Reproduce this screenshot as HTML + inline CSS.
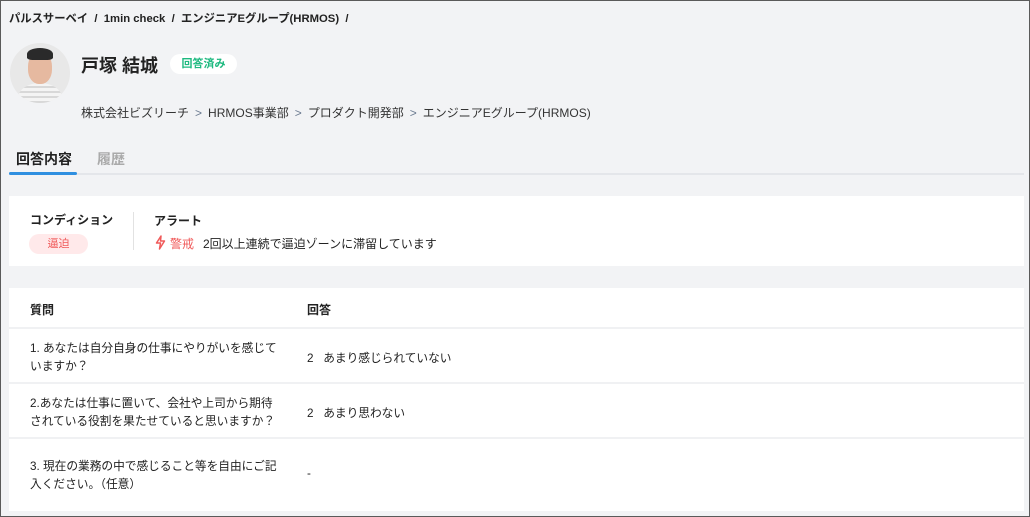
<!DOCTYPE html>
<html><head><meta charset="utf-8"><style>
*{margin:0;padding:0;box-sizing:border-box}
html,body{width:1030px;height:517px;overflow:hidden}
body{background:#f2f3f5;font-family:"Liberation Sans","Noto Sans CJK JP",sans-serif;color:#333;position:relative;border:1.5px solid #5a5a5a}
.a{position:absolute;white-space:nowrap}
.c{color:#6a7a90;margin:0 6px}
</style></head><body>
<div class="a" style="left:8px;top:9px;font-size:11.3px;font-weight:bold;color:#222">パルスサーベイ &nbsp;/&nbsp; 1min check &nbsp;/&nbsp; エンジニアEグループ(HRMOS) &nbsp;/</div>
<div class="a" style="left:9px;top:42px;width:60px;height:60px;border-radius:50%;background:#e8e8e8;overflow:hidden">
<div style="position:absolute;left:8px;top:40px;width:44px;height:30px;border-radius:50% 50% 0 0;background:repeating-linear-gradient(#f4f4f4 0 3px,#d8d8d8 3px 5px)"></div>
<div style="position:absolute;left:18px;top:9px;width:24px;height:32px;border-radius:45%;background:#e6b9a0"></div>
<div style="position:absolute;left:17px;top:5px;width:26px;height:12px;border-radius:50% 50% 20% 20%;background:#2a2a2a"></div>
</div>
<div class="a" style="left:80px;top:51px;font-size:18px;font-weight:bold;color:#222">戸塚 結城</div>
<div class="a" style="left:169px;top:53px;width:67px;height:20px;border-radius:10px;background:#fff;color:#1eb980;font-size:11px;font-weight:bold;text-align:center;line-height:20px">回答済み</div>
<div class="a" style="left:80px;top:103px;font-size:12px;color:#333">株式会社ビズリーチ<span class="c">&gt;</span>HRMOS事業部<span class="c">&gt;</span>プロダクト開発部<span class="c">&gt;</span>エンジニアEグループ(HRMOS)</div>
<div class="a" style="left:15px;top:148px;font-size:14px;font-weight:bold;color:#222">回答内容</div>
<div class="a" style="left:96px;top:148px;font-size:14px;font-weight:bold;color:#aaa">履歴</div>
<div class="a" style="left:8px;top:172px;width:1015px;height:2px;background:#e4e6ea"></div>
<div class="a" style="left:8px;top:171px;width:68px;height:3px;background:#2f8fe0;border-radius:2px"></div>
<div class="a" style="left:8px;top:195px;width:1015px;height:70px;background:#fff"></div>
<div class="a" style="left:29px;top:210px;font-size:12px;font-weight:bold;color:#222">コンディション</div>
<div class="a" style="left:28px;top:233px;width:59px;height:20px;border-radius:10px;background:#ffe9ea;color:#f05a5a;font-size:11px;text-align:center;line-height:20px">逼迫</div>
<div class="a" style="left:132px;top:211px;width:1px;height:38px;background:#e2e2e2"></div>
<div class="a" style="left:153px;top:211px;font-size:12px;font-weight:bold;color:#222">アラート</div>
<svg class="a" style="left:154px;top:234px" width="11" height="15" viewBox="0 0 11 15"><path d="M6 1L1.5 8H5.5L4.5 14L9.5 6H5.5Z" fill="none" stroke="#f05a5a" stroke-width="1.5" stroke-linejoin="round"/></svg>
<div class="a" style="left:169px;top:234px;font-size:12px;color:#f05a5a">警戒</div>
<div class="a" style="left:202px;top:234px;font-size:12px;color:#222">2回以上連続で逼迫ゾーンに滞留しています</div>
<div class="a" style="left:8px;top:287px;width:1015px;height:223px;background:#fff"></div>
<div class="a" style="left:29px;top:300px;font-size:12px;font-weight:bold;color:#222">質問</div>
<div class="a" style="left:306px;top:300px;font-size:12px;font-weight:bold;color:#222">回答</div>
<div class="a" style="left:8px;top:326px;width:1015px;height:2px;background:#f0f1f3"></div>
<div class="a" style="left:29px;top:339px;font-size:11.7px;line-height:18px;color:#222">1. あなたは自分自身の仕事にやりがいを感じて<br>いますか？</div>
<div class="a" style="left:306px;top:348px;font-size:11.7px;color:#222">2 &nbsp; あまり感じられていない</div>
<div class="a" style="left:8px;top:381px;width:1015px;height:2px;background:#f0f1f3"></div>
<div class="a" style="left:29px;top:394px;font-size:11.7px;line-height:18px;color:#222">2.あなたは仕事に置いて、会社や上司から期待<br>されている役割を果たせていると思いますか？</div>
<div class="a" style="left:306px;top:403px;font-size:11.7px;color:#222">2 &nbsp; あまり思わない</div>
<div class="a" style="left:8px;top:436px;width:1015px;height:2px;background:#f0f1f3"></div>
<div class="a" style="left:29px;top:457px;font-size:11.7px;line-height:18px;color:#222">3. 現在の業務の中で感じること等を自由にご記<br>入ください。（任意）</div>
<div class="a" style="left:306px;top:466px;font-size:11.7px;color:#222">-</div>
</body></html>
